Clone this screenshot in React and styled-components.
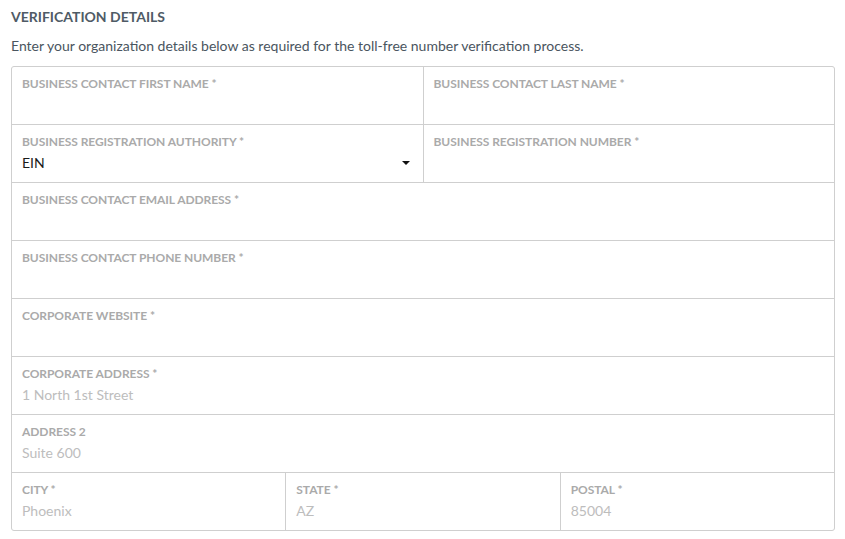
import React from "react";
import styled, { createGlobalStyle } from "styled-components";

const Global = createGlobalStyle`
  html, body { margin: 0; padding: 0; background: #fff; }
  body { font-family: Lato, "Open Sans", sans-serif; }
  * { box-sizing: border-box; }
`;

const Page = styled.div`
  padding: 8px 10px 0 11px;
  width: 845px;
`;

const Title = styled.h2`
  margin: 0;
  font-size: 14px;
  line-height: 18px;
  font-weight: 700;
  color: #4f5b66;
  text-transform: uppercase;
`;

const Intro = styled.p`
  margin: 11px 0 11px;
  font-size: 14px;
  line-height: 18px;
  color: #4a5560;
`;

const Form = styled.div`
  display: grid;
  grid-template-columns: repeat(6, 1fr);
  grid-auto-rows: 57px;
  gap: 1px;
  background: #cfcfcf;
  border: 1px solid #cfcfcf;
  border-radius: 3px;
  overflow: hidden;
`;

const Cell = styled.div`
  grid-column: span ${(p) => p.$span};
  background: #fff;
  padding: 10px 10px 0 10px;
  display: flex;
  flex-direction: column;
`;

const Label = styled.label`
  font-size: 12px;
  line-height: 14px;
  font-weight: 700;
  color: #aaaaaa;
  text-transform: uppercase;
  letter-spacing: -0.06px;
`;

const Value = styled.div`
  margin-top: 5px;
  font-size: 14px;
  line-height: 17px;
  color: ${(p) => (p.$placeholder ? "#bdbdbd" : "#1a1a1a")};
`;

const SelectRow = styled.div`
  display: flex;
  align-items: center;
  justify-content: space-between;
  padding-right: 3px;
`;

const Caret = styled.span`
  margin-top: 5px;
  width: 0;
  height: 0;
  border-left: 4px solid transparent;
  border-right: 4px solid transparent;
  border-top: 4px solid #111;
`;

const Field = ({ span, label, required, value, placeholder, select }) => (
  <Cell $span={span}>
    <Label>
      {label}
      {required ? " *" : ""}
    </Label>
    {select ? (
      <SelectRow>
        <Value>{value}</Value>
        <Caret />
      </SelectRow>
    ) : (
      <Value $placeholder={!!placeholder}>{placeholder || value || "\u00a0"}</Value>
    )}
  </Cell>
);

export default function App() {
  return (
    <Page>
      <Global />
      <Title>Verification Details</Title>
      <Intro>
        Enter your organization details below as required for the toll-free number verification process.
      </Intro>
      <Form>
        <Field span={3} label="Business Contact First Name" required />
        <Field span={3} label="Business Contact Last Name" required />
        <Field span={3} label="Business Registration Authority" required value="EIN" select />
        <Field span={3} label="Business Registration Number" required />
        <Field span={6} label="Business Contact Email Address" required />
        <Field span={6} label="Business Contact Phone Number" required />
        <Field span={6} label="Corporate Website" required />
        <Field span={6} label="Corporate Address" required placeholder="1 North 1st Street" />
        <Field span={6} label="Address 2" placeholder="Suite 600" />
        <Field span={2} label="City" required placeholder="Phoenix" />
        <Field span={2} label="State" required placeholder="AZ" />
        <Field span={2} label="Postal" required placeholder="85004" />
      </Form>
    </Page>
  );
}
